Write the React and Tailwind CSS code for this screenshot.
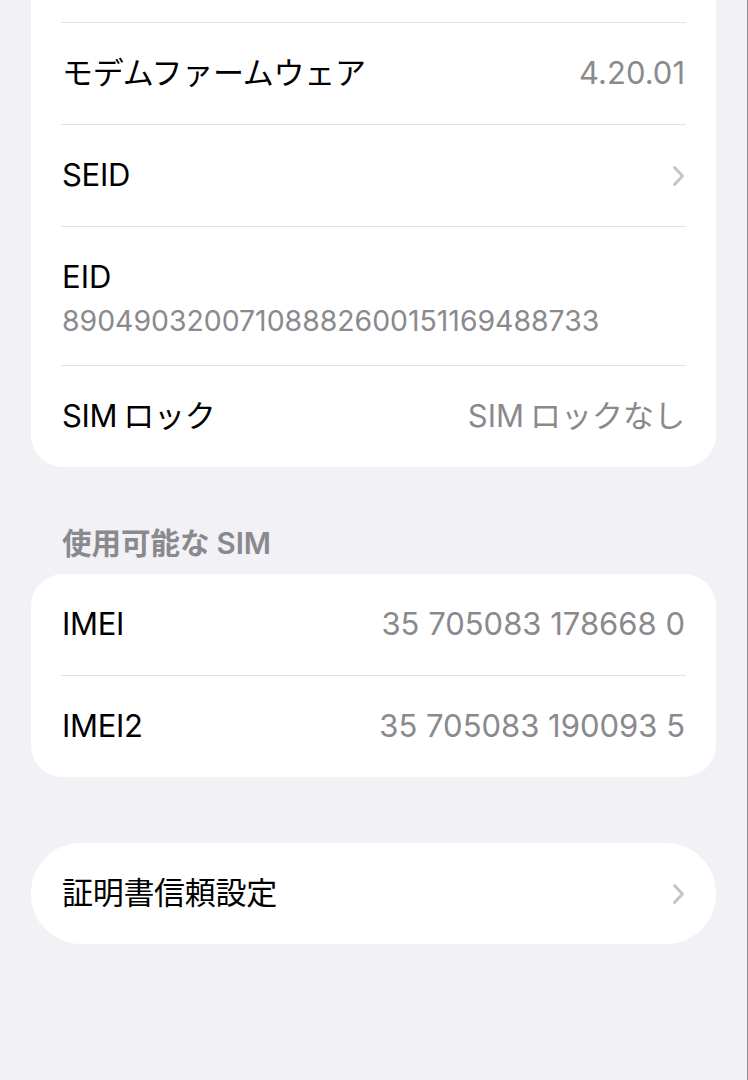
import React from 'react';

const font = { fontFamily: 'Inter, "Noto Sans CJK JP", sans-serif' };

const Chevron = () => (
  <svg width="13" height="22" viewBox="0 0 13 22" fill="none">
    <path d="M2.5 2.5 L10.5 11 L2.5 19.5" stroke="#c4c4c7" strokeWidth="3" strokeLinecap="round" strokeLinejoin="round" />
  </svg>
);

const Sim = ({ rest }) => (
  <>
    <span className="mr-[6px]">SIM</span>
    {rest}
  </>
);

const Row = ({ label, value, chevron, last }) => (
  <div className={`ml-[30px] mr-[30px] pr-px flex items-center justify-between h-[101px] ${last ? '' : 'border-b border-[#e1e1e5] box-content'}`}>
    <span className="pl-px text-[31px] text-black tracking-[-0.3px]">{label}</span>
    {value && <span className="text-[31px] text-[#8a8a8e]">{value}</span>}
    {chevron && <Chevron />}
  </div>
);

export default function App() {
  return (
    <div style={font} className="w-full min-h-[1080px] bg-[#f2f1f6] border-r border-[#8e8e93] px-[31px]">
      <div className="bg-white rounded-b-[32px]">
        <div className="ml-[30px] mr-[30px] h-[22px] border-b border-[#e1e1e5] box-content" />
        <Row label="モデムファームウェア" value="4.20.01" />
        <Row label="SEID" chevron />
        <div className="ml-[30px] mr-[30px] h-[139px] pt-[6px] border-b border-[#e1e1e5] box-border flex flex-col justify-center">
          <span className="pl-px text-[31px] leading-[44px] text-black">EID</span>
          <span className="pl-px text-[28.4px] leading-[44px] text-[#8a8a8e]">89049032007108882600151169488733</span>
        </div>
        <Row label={<Sim rest="ロック" />} value={<Sim rest="ロックなし" />} last />
      </div>

      <div className="pt-[59px] pb-[14px] pl-[31px]">
        <span className="block text-[29.5px] leading-[34px] font-semibold text-[#8a8a8e]">
          使用可能な<span className="ml-[7px]">SIM</span>
        </span>
      </div>

      <div className="bg-white rounded-[32px]">
        <Row label="IMEI" value="35 705083 178668 0" />
        <Row label="IMEI2" value="35 705083 190093 5" last />
      </div>

      <div className="h-[66px]" />

      <div className="bg-white rounded-[50px]">
        <Row label="証明書信頼設定" chevron last />
      </div>
    </div>
  );
}
